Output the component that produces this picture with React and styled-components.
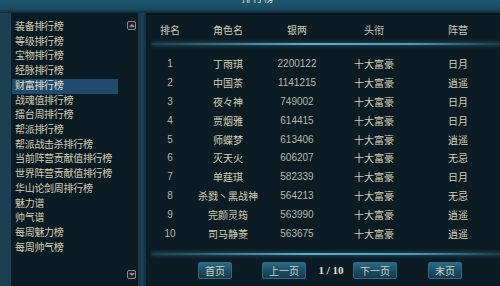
import React from 'react';
import styled, { createGlobalStyle } from 'styled-components';

const GlobalStyle = createGlobalStyle`
  html, body {
    margin: 0;
    padding: 0;
    background: #0a1a22;
  }
`;

const Frame = styled.div`
  width: 500px;
  height: 286px;
  overflow: hidden;
  display: flex;
  flex-direction: column;
  background: #0a1a22;
  font-family: "Liberation Sans", "Noto Sans CJK SC", sans-serif;
  color: #d8cfb4;
`;

const TopBar = styled.div`
  height: 13px;
  flex-shrink: 0;
  background: linear-gradient(180deg, #1f5870 0%, #1a4b60 70%, #0f2c38 100%);
  display: flex;
  justify-content: center;
  overflow: hidden;
`;

const Title = styled.div`
  font-size: 10px;
  line-height: 10px;
  margin-top: -6px;
  margin-left: 16px;
  color: #e8e0c8;
  letter-spacing: 1px;
`;

const Body = styled.div`
  flex: 1;
  display: flex;
  min-height: 0;
`;

const Side = styled.div`
  width: 138px;
  flex-shrink: 0;
  padding-left: 10px;
  box-sizing: border-box;
  background: linear-gradient(90deg, #1a4052 0%, #163646 100%);
  display: flex;
`;

const ListPanel = styled.div`
  flex: 1;
  position: relative;
  background: #0b1b23;
  border-left: 1px solid #1d4658;
  padding: 7px 0 0 1px;
  box-sizing: border-box;
`;

const ListItem = styled.div`
  width: 106px;
  height: 14.73px;
  line-height: 14.73px;
  font-size: 10px;
  letter-spacing: -0.3px;
  padding-left: 3px;
  box-sizing: border-box;
  white-space: nowrap;
  color: ${({ active }) => (active ? '#e6e0cc' : '#d4ccb2')};
  background: ${({ active }) => (active ? '#1d4c6e' : 'transparent')};
`;

const ScrollArrow = styled.div`
  position: absolute;
  right: 2px;
  ${({ down }) => (down ? 'bottom: 7px;' : 'top: 8px;')}
  width: 7px;
  height: 7px;
  border: 1px solid #7d8f98;
  border-radius: 2px;
  background: #16262e;
  display: flex;
  align-items: center;
  justify-content: center;
  &::after {
    content: '';
    width: 0;
    height: 0;
    border-left: 3px solid transparent;
    border-right: 3px solid transparent;
    ${({ down }) =>
      down ? 'border-top: 3px solid #e07070;' : 'border-bottom: 3px solid #e07070;'}
  }
`;

const Divider = styled.div`
  width: 8px;
  flex-shrink: 0;
  background: linear-gradient(90deg, #163646 0%, #1b4456 50%, #10303e 100%);
`;

const Main = styled.div`
  flex: 1;
  display: flex;
  flex-direction: column;
  background: #0b1c24;
  border-top: 2px solid #081419;
`;

const Grid = styled.div`
  display: grid;
  grid-template-columns: 48px 68px 70px 84px 1fr;
  align-items: center;
  height: ${({ h }) => h};
  font-size: 10px;
  color: ${({ head }) => (head ? '#cfcab8' : '#d8cfb4')};
`;

const Cell = styled.div`
  text-align: center;
  white-space: nowrap;
  color: ${({ dim }) => (dim ? '#b8b6a8' : 'inherit')};
`;

const Glow = styled.div`
  height: 2px;
  flex-shrink: 0;
  margin: 0 0 0 6px;
  background: linear-gradient(90deg, rgba(60, 140, 170, 0.3) 0%, #5db2d0 45%, #4a9cbc 75%, rgba(60, 140, 170, 0.3) 100%);
  box-shadow: 0 0 4px rgba(80, 170, 210, 0.6);
`;

const Rows = styled.div`
  padding-top: 9.5px;
  height: 208px;
  box-sizing: border-box;
  flex-shrink: 0;
`;

const Pager = styled.div`
  flex: 1;
  display: flex;
  align-items: center;
  padding-left: 52px;
  padding-bottom: 1px;
`;

const PageButton = styled.div`
  width: ${({ w }) => w}px;
  height: 17px;
  margin-right: ${({ mr }) => mr}px;
  box-sizing: border-box;
  border: 1px solid #2f6c84;
  border-radius: 2px;
  background: linear-gradient(180deg, #2a6a84 0%, #1b4c62 55%, #143a4c 100%);
  color: #d8d2be;
  font-size: 10px;
  display: flex;
  align-items: center;
  justify-content: center;
`;

const PageInfo = styled.div`
  width: 36px;
  margin-right: 4px;
  text-align: center;
  font-family: "Liberation Serif", serif;
  font-weight: bold;
  font-size: 11px;
  color: #e4e2da;
`;

const menu = [
  '装备排行榜',
  '等级排行榜',
  '宝物排行榜',
  '经脉排行榜',
  '财富排行榜',
  '战魂值排行榜',
  '擂台周排行榜',
  '帮派排行榜',
  '帮派战击杀排行榜',
  '当前阵营贡献值排行榜',
  '世界阵营贡献值排行榜',
  '华山论剑周排行榜',
  '魅力谱',
  '帅气谱',
  '每周魅力榜',
  '每周帅气榜',
];

const rows = [
  ['1', '丁雨琪', '2200122', '十大富豪', '日月'],
  ['2', '中国茶', '1141215', '十大富豪', '逍遥'],
  ['3', '夜々神', '749002', '十大富豪', '日月'],
  ['4', '贾烟雅', '614415', '十大富豪', '日月'],
  ['5', '师蝶梦', '613406', '十大富豪', '逍遥'],
  ['6', '灭天火', '606207', '十大富豪', '无忌'],
  ['7', '单莛琪', '582339', '十大富豪', '日月'],
  ['8', '杀戮丶黑战神', '564213', '十大富豪', '无忌'],
  ['9', '完颜灵筠', '563990', '十大富豪', '逍遥'],
  ['10', '司马静菱', '563675', '十大富豪', '逍遥'],
];

export default function App() {
  return (
    <>
      <GlobalStyle />
      <Frame>
        <TopBar>
          <Title>排行榜</Title>
        </TopBar>
        <Body>
          <Side>
            <ListPanel>
              {menu.map((m) => (
                <ListItem key={m} active={m === '财富排行榜'}>
                  {m}
                </ListItem>
              ))}
              <ScrollArrow />
              <ScrollArrow down />
            </ListPanel>
          </Side>
          <Divider />
          <Main>
            <Grid head h="28px">
              <Cell>排名</Cell>
              <Cell>角色名</Cell>
              <Cell>银两</Cell>
              <Cell>头衔</Cell>
              <Cell>阵营</Cell>
            </Grid>
            <Glow />
            <Rows>
              {rows.map((r) => (
                <Grid key={r[0]} h="18.8px">
                  <Cell dim>{r[0]}</Cell>
                  <Cell>{r[1]}</Cell>
                  <Cell dim>{r[2]}</Cell>
                  <Cell>{r[3]}</Cell>
                  <Cell>{r[4]}</Cell>
                </Grid>
              ))}
            </Rows>
            <Glow />
            <Pager>
              <PageButton w={34} mr={30}>首页</PageButton>
              <PageButton w={44} mr={7}>上一页</PageButton>
              <PageInfo>1 / 10</PageInfo>
              <PageButton w={44} mr={31}>下一页</PageButton>
              <PageButton w={34} mr={0}>末页</PageButton>
            </Pager>
          </Main>
        </Body>
      </Frame>
    </>
  );
}
